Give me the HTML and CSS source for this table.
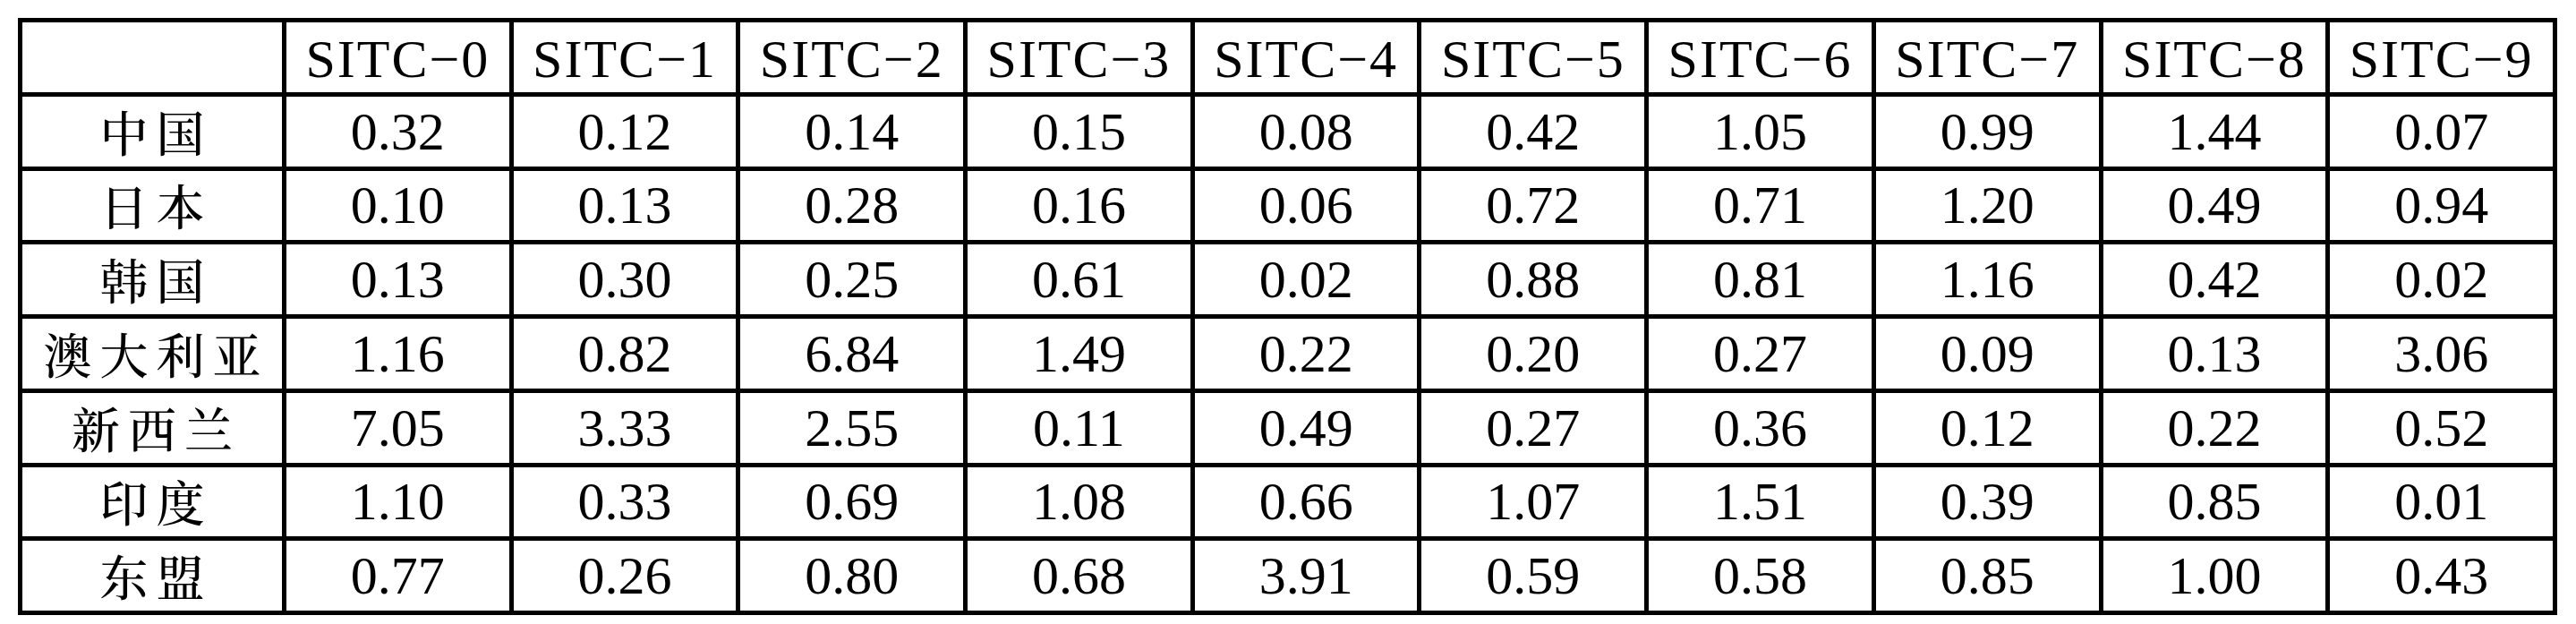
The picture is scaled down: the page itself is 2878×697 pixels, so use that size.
FILE: index.html
```html
<!DOCTYPE html>
<html lang="zh">
<head>
<meta charset="utf-8">
<title>SITC</title>
<link rel="stylesheet" href="styles.css">
</head>
<body>
<div class="table">
  <div class="cell"></div>
  <div class="cell head">SITC−0</div>
  <div class="cell head">SITC−1</div>
  <div class="cell head">SITC−2</div>
  <div class="cell head">SITC−3</div>
  <div class="cell head">SITC−4</div>
  <div class="cell head">SITC−5</div>
  <div class="cell head">SITC−6</div>
  <div class="cell head">SITC−7</div>
  <div class="cell head">SITC−8</div>
  <div class="cell head">SITC−9</div>

  <div class="cell name">中国</div>
  <div class="cell">0.32</div><div class="cell">0.12</div><div class="cell">0.14</div><div class="cell">0.15</div><div class="cell">0.08</div><div class="cell">0.42</div><div class="cell">1.05</div><div class="cell">0.99</div><div class="cell">1.44</div><div class="cell">0.07</div>

  <div class="cell name">日本</div>
  <div class="cell">0.10</div><div class="cell">0.13</div><div class="cell">0.28</div><div class="cell">0.16</div><div class="cell">0.06</div><div class="cell">0.72</div><div class="cell">0.71</div><div class="cell">1.20</div><div class="cell">0.49</div><div class="cell">0.94</div>

  <div class="cell name">韩国</div>
  <div class="cell">0.13</div><div class="cell">0.30</div><div class="cell">0.25</div><div class="cell">0.61</div><div class="cell">0.02</div><div class="cell">0.88</div><div class="cell">0.81</div><div class="cell">1.16</div><div class="cell">0.42</div><div class="cell">0.02</div>

  <div class="cell name">澳大利亚</div>
  <div class="cell">1.16</div><div class="cell">0.82</div><div class="cell">6.84</div><div class="cell">1.49</div><div class="cell">0.22</div><div class="cell">0.20</div><div class="cell">0.27</div><div class="cell">0.09</div><div class="cell">0.13</div><div class="cell">3.06</div>

  <div class="cell name">新西兰</div>
  <div class="cell">7.05</div><div class="cell">3.33</div><div class="cell">2.55</div><div class="cell">0.11</div><div class="cell">0.49</div><div class="cell">0.27</div><div class="cell">0.36</div><div class="cell">0.12</div><div class="cell">0.22</div><div class="cell">0.52</div>

  <div class="cell name">印度</div>
  <div class="cell">1.10</div><div class="cell">0.33</div><div class="cell">0.69</div><div class="cell">1.08</div><div class="cell">0.66</div><div class="cell">1.07</div><div class="cell">1.51</div><div class="cell">0.39</div><div class="cell">0.85</div><div class="cell">0.01</div>

  <div class="cell name">东盟</div>
  <div class="cell">0.77</div><div class="cell">0.26</div><div class="cell">0.80</div><div class="cell">0.68</div><div class="cell">3.91</div><div class="cell">0.59</div><div class="cell">0.58</div><div class="cell">0.85</div><div class="cell">1.00</div><div class="cell">0.43</div>
</div>
</body>
</html>
```

FILE: styles.css
```css
html, body {
  margin: 0;
  padding: 0;
  background: #fff;
}

body {
  padding: 20px;
  font-family: "Liberation Serif", "Noto Serif CJK SC", "Noto Sans CJK SC", serif;
  color: #000;
}

.table {
  box-sizing: border-box;
  width: 2837px;
  height: 667px;
  background: #000;
  padding: 5px;
  display: grid;
  grid-template-columns: 290px repeat(10, 1fr);
  grid-template-rows: repeat(8, 1fr);
  gap: 5px;
}

.cell {
  background: #fff;
  display: flex;
  align-items: center;
  justify-content: center;
  font-size: 60px;
  line-height: 1;
  white-space: nowrap;
}

.head {
  letter-spacing: 2px;
  padding-top: 4px;
}

.name {
  font-family: "Noto Serif CJK SC", "Noto Sans CJK SC", serif;
  font-size: 54px;
  font-weight: 500;
  letter-spacing: 9px;
  padding-left: 9px;
}
```
